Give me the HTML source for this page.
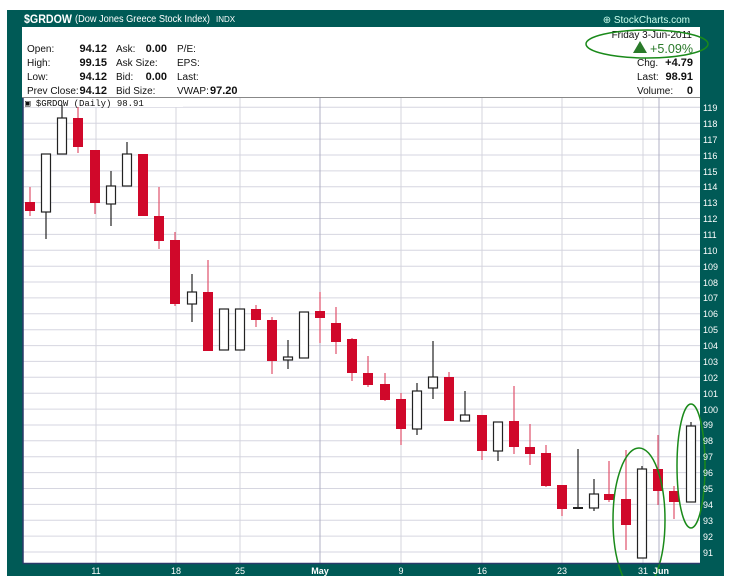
<!DOCTYPE html>
<html><head><meta charset="utf-8"><style>
html,body{margin:0;padding:0;background:#fff;width:732px;height:576px;overflow:hidden}
svg{display:block;font-family:"Liberation Sans",sans-serif}
.r{fill:#d0082a}.rw{stroke:#e0506a;stroke-width:1.2}
.w{fill:#fff;stroke:#222;stroke-width:1.2}.ww{stroke:#222;stroke-width:1.2}
.g{stroke:#d6d6e0;stroke-width:1}
.v{stroke:#d4d4de;stroke-width:1}
.ax{fill:#fff;font-size:9px}
.t{font-size:10px;fill:#111}
.b{font-size:11px;font-weight:bold;fill:#111}
</style></head><body>
<svg width="732" height="576" viewBox="0 0 732 576">
<rect x="7" y="10" width="717" height="566" fill="#005a56"/>
<text x="24" y="23" fill="#fff" font-size="12" font-weight="bold" textLength="48" lengthAdjust="spacingAndGlyphs">$GRDOW</text>
<text x="75" y="22" fill="#fff" font-size="10" textLength="135" lengthAdjust="spacingAndGlyphs">(Dow Jones Greece Stock Index)</text>
<text x="216" y="22" fill="#fff" font-size="8">INDX</text>
<text x="690" y="23" fill="#cfe" font-size="10" text-anchor="end">⊕ StockCharts.com</text>
<rect x="22" y="27" width="678" height="70" fill="#fff"/>
<line x1="22" y1="97.5" x2="700" y2="97.5" stroke="#888"/>
<g class="t">
<text x="27" y="52">Open:</text><text x="27" y="66">High:</text><text x="27" y="80">Low:</text><text x="27" y="94">Prev Close:</text>
<text x="116" y="52">Ask:</text><text x="116" y="66">Ask Size:</text><text x="116" y="80">Bid:</text><text x="116" y="94">Bid Size:</text>
<text x="177" y="52">P/E:</text><text x="177" y="66">EPS:</text><text x="177" y="80">Last:</text><text x="177" y="94">VWAP:</text>
<text x="692" y="38" text-anchor="end">Friday  3-Jun-2011</text>
<text x="637" y="66">Chg.</text><text x="637" y="80">Last:</text><text x="637" y="94">Volume:</text>
</g>
<g class="b">
<text x="107" y="52" text-anchor="end">94.12</text><text x="107" y="66" text-anchor="end">99.15</text><text x="107" y="80" text-anchor="end">94.12</text><text x="107" y="94" text-anchor="end">94.12</text>
<text x="167" y="52" text-anchor="end">0.00</text><text x="167" y="80" text-anchor="end">0.00</text>
<text x="210" y="94">97.20</text>
<text x="693" y="66" text-anchor="end">+4.79</text><text x="693" y="80" text-anchor="end">98.91</text><text x="693" y="94" text-anchor="end">0</text>
</g>
<polygon points="633,53 640,41 647,53" fill="#2a7a2a"/>
<text x="693" y="53" fill="#2a7a2a" font-size="13" text-anchor="end" textLength="43" lengthAdjust="spacingAndGlyphs">+5.09%</text>
<ellipse cx="647" cy="44" rx="61" ry="14" fill="none" stroke="#1a8a1a" stroke-width="1.5"/>
<rect x="23" y="98" width="677" height="465" fill="#fff"/>
<g class="g">
<line x1="23" x2="700" y1="107.3" y2="107.3"/><line x1="23" x2="700" y1="123.2" y2="123.2"/><line x1="23" x2="700" y1="139.1" y2="139.1"/><line x1="23" x2="700" y1="155" y2="155"/><line x1="23" x2="700" y1="170.9" y2="170.9"/><line x1="23" x2="700" y1="186.7" y2="186.7"/><line x1="23" x2="700" y1="202.6" y2="202.6"/><line x1="23" x2="700" y1="218.5" y2="218.5"/><line x1="23" x2="700" y1="234.4" y2="234.4"/><line x1="23" x2="700" y1="250.3" y2="250.3"/><line x1="23" x2="700" y1="266.2" y2="266.2"/><line x1="23" x2="700" y1="282" y2="282"/><line x1="23" x2="700" y1="297.9" y2="297.9"/><line x1="23" x2="700" y1="313.8" y2="313.8"/><line x1="23" x2="700" y1="329.7" y2="329.7"/><line x1="23" x2="700" y1="345.6" y2="345.6"/><line x1="23" x2="700" y1="361.4" y2="361.4"/><line x1="23" x2="700" y1="377.3" y2="377.3"/><line x1="23" x2="700" y1="393.2" y2="393.2"/><line x1="23" x2="700" y1="409.1" y2="409.1"/><line x1="23" x2="700" y1="425" y2="425"/><line x1="23" x2="700" y1="440.8" y2="440.8"/><line x1="23" x2="700" y1="456.7" y2="456.7"/><line x1="23" x2="700" y1="472.6" y2="472.6"/><line x1="23" x2="700" y1="488.5" y2="488.5"/><line x1="23" x2="700" y1="504.4" y2="504.4"/><line x1="23" x2="700" y1="520.2" y2="520.2"/><line x1="23" x2="700" y1="536.1" y2="536.1"/><line x1="23" x2="700" y1="552" y2="552"/>
</g>
<g class="v">
<line x1="96" x2="96" y1="98" y2="563"/><line x1="176" x2="176" y1="98" y2="563"/><line x1="240" x2="240" y1="98" y2="563"/><line x1="320" x2="320" y1="98" y2="563" stroke="#b0b0c4"/><line x1="401" x2="401" y1="98" y2="563"/><line x1="482" x2="482" y1="98" y2="563"/><line x1="562" x2="562" y1="98" y2="563"/><line x1="643" x2="643" y1="98" y2="563"/><line x1="659" x2="659" y1="98" y2="563" stroke="#b0b0c4"/>
</g>
<rect x="23" y="98" width="160" height="9" fill="#fff"/>
<text x="25" y="106" font-size="9" font-family="Liberation Mono,monospace" fill="#111">▣ $GRDOW (Daily) 98.91</text>
<line class="rw" x1="30" y1="187" x2="30" y2="216"/><rect class="r" x="25" y="202" width="10" height="9"/>
<line class="ww" x1="46" y1="154" x2="46" y2="239"/><rect class="w" x="41.5" y="154" width="9" height="58"/>
<line class="ww" x1="62" y1="105" x2="62" y2="154"/><rect class="w" x="57.5" y="118" width="9" height="36"/>
<line class="rw" x1="78" y1="107" x2="78" y2="153"/><rect class="r" x="73" y="118" width="10" height="29"/>
<line class="rw" x1="95" y1="150" x2="95" y2="214"/><rect class="r" x="90" y="150" width="10" height="53"/>
<line class="ww" x1="111" y1="171" x2="111" y2="226"/><rect class="w" x="106.5" y="186" width="9" height="18"/>
<line class="ww" x1="127" y1="142" x2="127" y2="186"/><rect class="w" x="122.5" y="154" width="9" height="32"/>
<rect class="r" x="138" y="154" width="10" height="62"/>
<line class="rw" x1="159" y1="187" x2="159" y2="249"/><rect class="r" x="154" y="216" width="10" height="25"/>
<line class="rw" x1="175" y1="232" x2="175" y2="306"/><rect class="r" x="170" y="240" width="10" height="64"/>
<line class="ww" x1="192" y1="274" x2="192" y2="322"/><rect class="w" x="187.5" y="292" width="9" height="12"/>
<line class="rw" x1="208" y1="260" x2="208" y2="351"/><rect class="r" x="203" y="292" width="10" height="59"/>
<rect class="w" x="219.5" y="309" width="9" height="41"/>
<rect class="w" x="235.5" y="309" width="9" height="41"/>
<line class="rw" x1="256" y1="305" x2="256" y2="327"/><rect class="r" x="251" y="309" width="10" height="11"/>
<line class="rw" x1="272" y1="317" x2="272" y2="374"/><rect class="r" x="267" y="320" width="10" height="41"/>
<line class="ww" x1="288" y1="340" x2="288" y2="369"/><rect class="w" x="283.5" y="357" width="9" height="3"/>
<rect class="w" x="299.5" y="312" width="9" height="46"/>
<line class="rw" x1="320" y1="292" x2="320" y2="343"/><rect class="r" x="315" y="311" width="10" height="7"/>
<line class="rw" x1="336" y1="307" x2="336" y2="354"/><rect class="r" x="331" y="323" width="10" height="19"/>
<line class="rw" x1="352" y1="338" x2="352" y2="381"/><rect class="r" x="347" y="339" width="10" height="34"/>
<line class="rw" x1="368" y1="356" x2="368" y2="387"/><rect class="r" x="363" y="373" width="10" height="12"/>
<line class="rw" x1="385" y1="373" x2="385" y2="401"/><rect class="r" x="380" y="384" width="10" height="16"/>
<line class="rw" x1="401" y1="393" x2="401" y2="445"/><rect class="r" x="396" y="399" width="10" height="30"/>
<line class="ww" x1="417" y1="383" x2="417" y2="435"/><rect class="w" x="412.5" y="391" width="9" height="38"/>
<line class="ww" x1="433" y1="341" x2="433" y2="399"/><rect class="w" x="428.5" y="377" width="9" height="11"/>
<line class="rw" x1="449" y1="372" x2="449" y2="421"/><rect class="r" x="444" y="377" width="10" height="44"/>
<line class="ww" x1="465" y1="391" x2="465" y2="421"/><rect class="w" x="460.5" y="415" width="9" height="6"/>
<line class="rw" x1="482" y1="415" x2="482" y2="460"/><rect class="r" x="477" y="415" width="10" height="36"/>
<line class="ww" x1="498" y1="422" x2="498" y2="461"/><rect class="w" x="493.5" y="422" width="9" height="29"/>
<line class="rw" x1="514" y1="386" x2="514" y2="454"/><rect class="r" x="509" y="421" width="10" height="26"/>
<line class="rw" x1="530" y1="424" x2="530" y2="465"/><rect class="r" x="525" y="447" width="10" height="7"/>
<line class="rw" x1="546" y1="445" x2="546" y2="487"/><rect class="r" x="541" y="453" width="10" height="33"/>
<line class="rw" x1="562" y1="485" x2="562" y2="516"/><rect class="r" x="557" y="485" width="10" height="24"/>
<line class="ww" x1="578" y1="449" x2="578" y2="508"/><rect x="573" y="507" width="10" height="2" fill="#222"/>
<line class="ww" x1="594" y1="479" x2="594" y2="511"/><rect class="w" x="589.5" y="494" width="9" height="14"/>
<line class="rw" x1="609" y1="461" x2="609" y2="502"/><rect class="r" x="604" y="494" width="10" height="6"/>
<line class="rw" x1="626" y1="450" x2="626" y2="550"/><rect class="r" x="621" y="499" width="10" height="26"/>
<line class="ww" x1="642" y1="466" x2="642" y2="469"/><rect class="w" x="637.5" y="469" width="9" height="89"/>
<line class="rw" x1="658" y1="435" x2="658" y2="505"/><rect class="r" x="653" y="469" width="10" height="22"/>
<line class="rw" x1="674" y1="486" x2="674" y2="519"/><rect class="r" x="669" y="491" width="10" height="11"/>
<line class="ww" x1="691" y1="422" x2="691" y2="426"/><rect class="w" x="686.5" y="426" width="9" height="76"/>
<rect x="23" y="563" width="677" height="13" fill="#005a56"/>
<ellipse cx="639" cy="520" rx="26" ry="72" fill="none" stroke="#1a8a1a" stroke-width="1.5"/>
<ellipse cx="691" cy="466" rx="14" ry="62" fill="none" stroke="#1a8a1a" stroke-width="1.5"/>
<line x1="23" y1="98" x2="23" y2="563.5" stroke="#2a3a6a" stroke-width="1.5"/>
<line x1="23" y1="563.5" x2="700" y2="563.5" stroke="#2a3a6a" stroke-width="1.5"/>
<g class="ax">
<text x="703" y="111">119</text><text x="703" y="127">118</text><text x="703" y="143">117</text><text x="703" y="159">116</text><text x="703" y="175">115</text><text x="703" y="190">114</text><text x="703" y="206">113</text><text x="703" y="222">112</text><text x="703" y="238">111</text><text x="703" y="254">110</text><text x="703" y="270">109</text><text x="703" y="286">108</text><text x="703" y="301">107</text><text x="703" y="317">106</text><text x="703" y="333">105</text><text x="703" y="349">104</text><text x="703" y="365">103</text><text x="703" y="381">102</text><text x="703" y="397">101</text><text x="703" y="413">100</text><text x="703" y="428">99</text><text x="703" y="444">98</text><text x="703" y="460">97</text><text x="703" y="476">96</text><text x="703" y="492">95</text><text x="703" y="508">94</text><text x="703" y="524">93</text><text x="703" y="540">92</text><text x="703" y="556">91</text>
<g text-anchor="middle"><text x="96" y="574">11</text><text x="176" y="574">18</text><text x="240" y="574">25</text><text x="320" y="574" font-weight="bold">May</text><text x="401" y="574">9</text><text x="482" y="574">16</text><text x="562" y="574">23</text><text x="643" y="574">31</text><text x="661" y="574" font-weight="bold">Jun</text></g>
</g>
</svg>
</body></html>
